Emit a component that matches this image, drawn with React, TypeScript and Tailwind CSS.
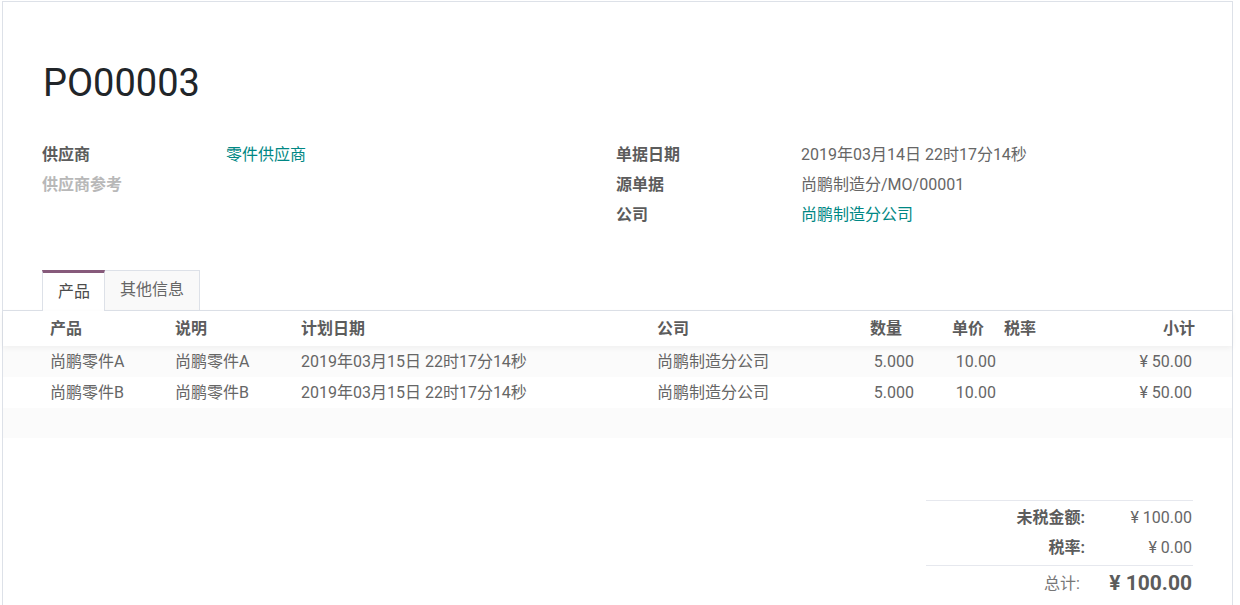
export default function App() {
  const font = '[font-family:Roboto,"Noto_Sans_CJK_SC",sans-serif]';
  const cols = "grid grid-cols-[125px_126px_356px_211px_62px_82px_40px_156px] pl-[39px]";
  const rows = [
    ["尚鹏零件A", "bg-[#fbfbfb]"],
    ["尚鹏零件B", "bg-white"],
  ];
  return (
    <div className={`h-[605px] w-[1240px] overflow-hidden bg-white text-[16px] leading-[24px] text-[#666666] ${font}`}>
      <div className="ml-[2px] mt-[1px] h-[604px] w-[1231px] border-x border-t border-[#dde1e8]">
        <h1 className="pl-[40px] pt-[56px] text-[38px] leading-[50px] font-normal text-[#212529]">PO00003</h1>
        <div className="mt-[32px] grid grid-cols-[574px_1fr] pl-[39px]">
          <div className="grid grid-cols-[184px_1fr] auto-rows-[30px] items-center">
            <span className="font-bold text-[#5c5c5c]">供应商</span>
            <span className="text-[#008784]">零件供应商</span>
            <span className="font-bold text-[#b8b8b8]">供应商参考</span>
            <span />
          </div>
          <div className="grid grid-cols-[185px_1fr] auto-rows-[30px] items-center">
            <span className="font-bold text-[#5c5c5c]">单据日期</span>
            <span>2019年03月14日 22时17分14秒</span>
            <span className="font-bold text-[#5c5c5c]">源单据</span>
            <span>尚鹏制造分/MO/00001</span>
            <span className="font-bold text-[#5c5c5c]">公司</span>
            <span className="text-[#008784]">尚鹏制造分公司</span>
          </div>
        </div>
        <div className="mt-[40px] flex h-[41px] border-b border-[#dde1e8] pl-[39px]">
          <div className="flex h-[41px] w-[63px] items-center justify-center border-x border-t-[3px] border-x-[#dde1e8] border-t-[#875a7b] bg-white pl-[1px] text-[#4c4c4c]">产品</div>
          <div className="flex h-[40px] w-[95px] items-center justify-center border-r border-t border-[#dde1e8] bg-[#f9f9f9] pb-[2px]">其他信息</div>
        </div>
        <div className="relative z-10 h-[35px] bg-white shadow-[0_2px_6px_rgba(0,0,0,0.05)]">
          <div className={`${cols} h-full items-center font-bold text-[#5c5c5c]`}>
            <span className="pl-[8px]">产品</span>
            <span className="pl-[8px]">说明</span>
            <span className="pl-[8px]">计划日期</span>
            <span className="pl-[8px]">公司</span>
            <span className="pr-[20px] text-right">数量</span>
            <span className="pr-[20px] text-right">单价</span>
            <span>税率</span>
            <span className="pr-[5px] text-right">小计</span>
          </div>
        </div>
        {rows.map(([name, bg]) => (
          <div key={name} className={`${cols} h-[31px] items-center ${bg}`}>
            <span className="pl-[8px]">{name}</span>
            <span className="pl-[8px]">{name}</span>
            <span className="pl-[8px]">2019年03月15日 22时17分14秒</span>
            <span className="pl-[8px]">尚鹏制造分公司</span>
            <span className="pr-[8px] text-right">5.000</span>
            <span className="pr-[8px] text-right">10.00</span>
            <span />
            <span className="pr-[8px] text-right">¥ 50.00</span>
          </div>
        ))}
        <div className="h-[30px] bg-[#fbfbfb]" />
        <div className="ml-[923px] mt-[62px] w-[267px] border-t border-[#e6e8ee]">
          <div className="grid h-[31px] grid-cols-[159px_1fr] items-center pr-[1px] pt-[2px] text-right">
            <span className="font-bold text-[#5c5c5c]">未税金额:</span>
            <span>¥ 100.00</span>
          </div>
          <div className="grid h-[30px] grid-cols-[159px_1fr] items-center pr-[1px] pt-[2px] text-right">
            <span className="font-bold text-[#5c5c5c]">税率:</span>
            <span>¥ 0.00</span>
          </div>
          <div className="mt-[3px] grid h-[36px] grid-cols-[154px_1fr] items-center border-t border-[#e6e8ee] pr-[1px] text-right">
            <span className="text-[#777777]">总计:</span>
            <span className="pb-[2px] text-[21px] font-bold text-[#5c5c5c]">¥ 100.00</span>
          </div>
        </div>
      </div>
    </div>
  );
}
